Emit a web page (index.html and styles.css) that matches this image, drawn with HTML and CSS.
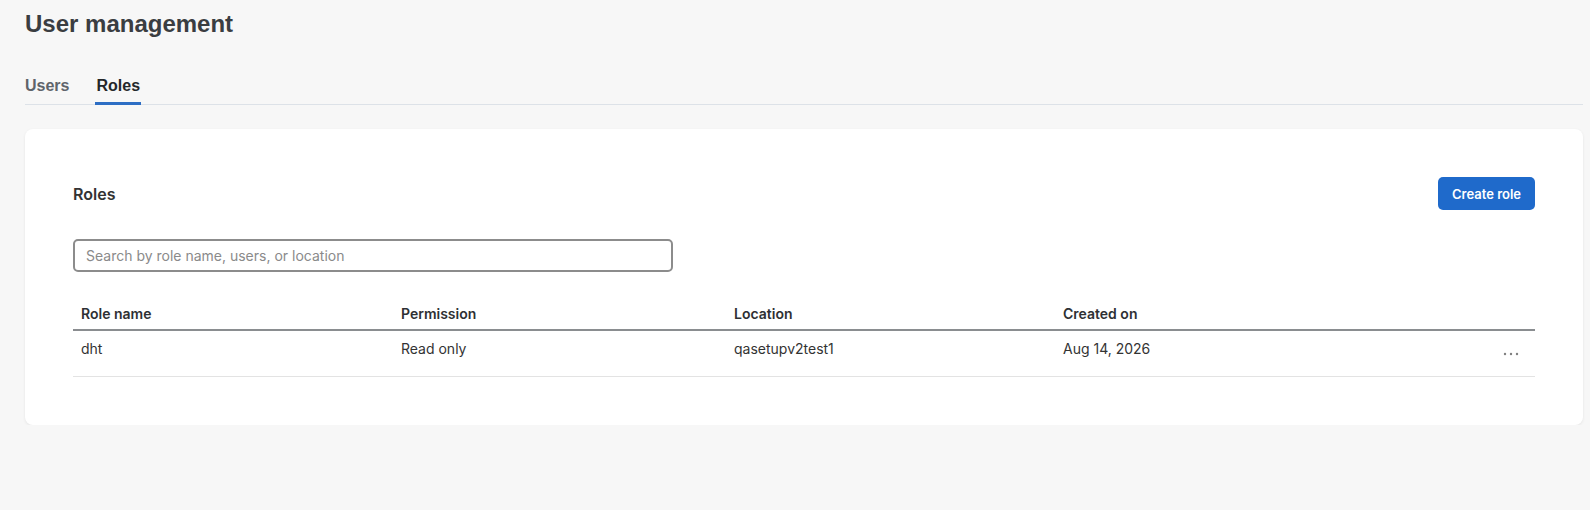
FILE: index.html
```html
<!DOCTYPE html>
<html lang="en">
<head>
<meta charset="utf-8">
<title>User management</title>
<link rel="stylesheet" href="styles.css">
</head>
<body>
<div class="page">
  <h1 class="title">User management</h1>
  <nav class="tabs">
    <a class="tab">Users</a>
    <a class="tab active">Roles</a>
  </nav>
  <section class="card">
    <div class="card-head">
      <h2 class="card-title">Roles</h2>
      <button class="btn-primary">Create role</button>
    </div>
    <div class="search">
      <input class="search-input" type="text" placeholder="Search by role name, users, or location">
    </div>
    <table class="table">
      <colgroup>
        <col class="c1"><col class="c2"><col class="c3"><col class="c4"><col class="c5">
      </colgroup>
      <thead>
        <tr>
          <th>Role name</th>
          <th>Permission</th>
          <th>Location</th>
          <th>Created on</th>
          <th></th>
        </tr>
      </thead>
      <tbody>
        <tr>
          <td>dht</td>
          <td>Read only</td>
          <td>qasetupv2test1</td>
          <td>Aug 14, 2026</td>
          <td class="actions">
            <button class="more" aria-label="More actions">
              <svg width="16" height="4" viewBox="0 0 16 4"><circle cx="2" cy="2" r="1.2" fill="#7f7f7f"/><circle cx="8" cy="2" r="1.2" fill="#7f7f7f"/><circle cx="14" cy="2" r="1.2" fill="#7f7f7f"/></svg>
            </button>
          </td>
        </tr>
      </tbody>
    </table>
  </section>
</div>
</body>
</html>
```

FILE: styles.css
```css
* { box-sizing: border-box; }
html, body {
  margin: 0;
  padding: 0;
  background: #f7f7f7;
}
body {
  font-family: Inter, "Noto Sans", sans-serif;
  color: #333;
}
.page {
  padding: 9px 7px 0 25px;
}
.title {
  margin: 0;
  font-family: "Liberation Sans", Arial, sans-serif;
  font-weight: 700;
  font-size: 24px;
  line-height: 30px;
  color: #3a3d41;
}
.tabs {
  margin-top: 37px;
  display: flex;
  gap: 25px;
  border-bottom: 1px solid #dde2e8;
}
.tab {
  font-family: "Liberation Sans", Arial, sans-serif;
  font-weight: 700;
  font-size: 16px;
  line-height: 20px;
  color: #5f646b;
  padding: 0 1px 6px;
  border-bottom: 3px solid transparent;
  margin-bottom: -1px;
}
.tab:first-child { padding-left: 0; }
.tab.active {
  color: #24272a;
  border-bottom-color: #2d6ec4;
}
.card {
  margin-top: 24px;
  background: #fff;
  border-radius: 8px;
  box-shadow: 0 1px 3px rgba(0,0,0,0.08);
  padding: 48px 48px 48px;
}
.card-head {
  display: flex;
  align-items: center;
  justify-content: space-between;
  height: 33px;
}
.card-title {
  margin: 0;
  font-size: 16px;
  font-weight: 600;
  line-height: 20px;
  color: #333;
}
.btn-primary {
  font-family: Inter, sans-serif;
  font-weight: 600;
  font-size: 13px;
  color: #fff;
  background: #1f6acb;
  border: none;
  border-radius: 5px;
  height: 33px;
  width: 97px;
  padding: 0;
}
.search {
  margin-top: 29px;
}
.search-input {
  width: 600px;
  height: 33px;
  border: 2px solid #8c8c8c;
  border-radius: 5px;
  padding: 0 11px;
  font-family: Inter, sans-serif;
  font-size: 14px;
  color: #333;
  background: #fff;
}
.search-input::placeholder {
  color: #8a8a8a;
}
.table {
  margin-top: 24px;
  width: 100%;
  border-collapse: collapse;
  table-layout: fixed;
}
.c1 { width: 320px; }
.c2 { width: 333px; }
.c3 { width: 329px; }
.c5 { width: 56px; }
.table th {
  text-align: left;
  font-size: 14px;
  font-weight: 600;
  line-height: 20px;
  color: #2e3033;
  padding: 8px 8px 5px;
  border-bottom: 2px solid #8a8d90;
}
.table td {
  font-size: 14px;
  line-height: 20px;
  color: #333;
  padding: 8px 8px 7px;
  vertical-align: top;
  border-bottom: 1px solid #e3e3e3;
}
.table td.actions {
  padding: 8px 8px 7px;
  vertical-align: middle;
  text-align: right;
}
.more {
  width: 32px;
  height: 30px;
  border: none;
  background: transparent;
  padding: 0;
  display: inline-flex;
  align-items: center;
  justify-content: center;
}
.more svg { display: block; }
```
